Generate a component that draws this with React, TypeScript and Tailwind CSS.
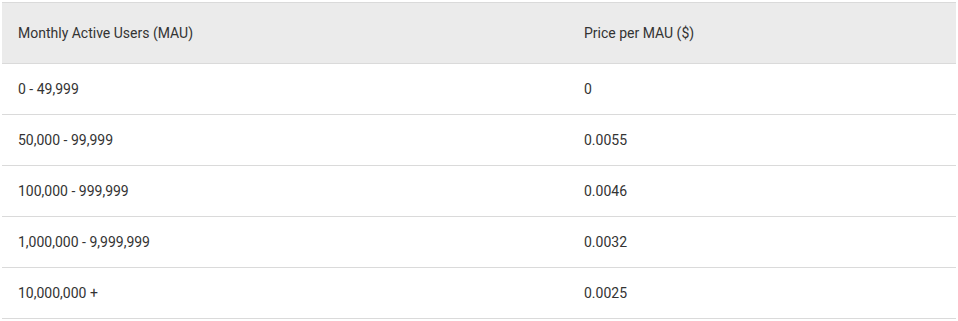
const rows = [
  { mau: "0 - 49,999", price: "0" },
  { mau: "50,000 - 99,999", price: "0.0055" },
  { mau: "100,000 - 999,999", price: "0.0046" },
  { mau: "1,000,000 - 9,999,999", price: "0.0032" },
  { mau: "10,000,000 +", price: "0.0025" },
];

export default function App() {
  return (
    <div className="bg-white px-[2px] pt-[2px] font-['Roboto',sans-serif] text-[14px] text-[#333333]">
      <table className="w-[954px] border-collapse">
        <thead>
          <tr className="h-[61px] border-y border-[#dadada] bg-[#ebebeb]">
            <th className="w-[566px] px-4 text-left font-normal">Monthly Active Users (MAU)</th>
            <th className="px-4 text-left font-normal">Price per MAU ($)</th>
          </tr>
        </thead>
        <tbody>
          {rows.map((r) => (
            <tr key={r.mau} className="h-[51px] border-b border-[#dadada]">
              <td className="px-4">{r.mau}</td>
              <td className="px-4">{r.price}</td>
            </tr>
          ))}
        </tbody>
      </table>
    </div>
  );
}
